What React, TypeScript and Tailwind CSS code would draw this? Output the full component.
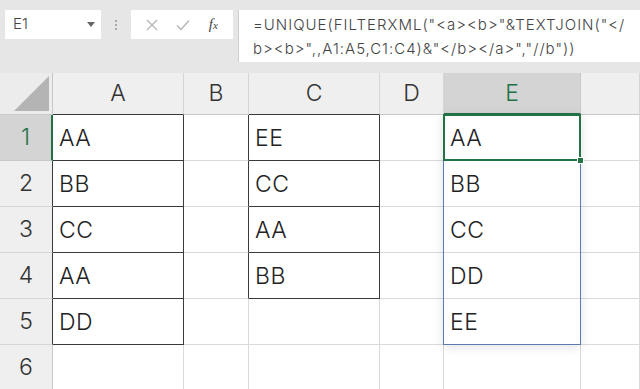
import React from 'react';

const cols = ['A', 'B', 'C', 'D', 'E', 'F'];
const data: Record<string, string> = {
  A1: 'AA', A2: 'BB', A3: 'CC', A4: 'AA', A5: 'DD',
  C1: 'EE', C2: 'CC', C3: 'AA', C4: 'BB',
  E1: 'AA', E2: 'BB', E3: 'CC', E4: 'DD', E5: 'EE',
};

// cells inside the bordered ranges A1:A5 and C1:C4
const inRange = (c: string, r: number) => (c === 'A' && r <= 5) || (c === 'C' && r <= 4);

function Cell({ c, r }: { c: string; r: number }) {
  const right = inRange(c, r) || (c === 'B' && r <= 4) ? 'border-r-[#3a3a3a]' : 'border-r-[#dadada]';
  const bottom = inRange(c, r) ? 'border-b-[#3a3a3a]' : 'border-b-[#dadada]';
  return (
    <div className={`border-r border-b ${right} ${bottom} bg-white flex items-center pl-[6px] pt-[1px] text-[23px] font-light tracking-[0.5px] text-[#222] overflow-hidden`}>
      {data[c + r] ?? ''}
    </div>
  );
}

export default function App() {
  const font = { fontFamily: 'Inter, "Noto Sans CJK JP", sans-serif' };
  return (
    <div className="w-[640px] h-[389px] overflow-hidden bg-[#e6e6e6]" style={font}>
      {/* toolbar */}
      <div className="h-[73px] flex items-start pt-[10px]">
        <div className="ml-[5px] w-[96px] h-[29px] bg-white flex items-center justify-between pl-[8px] pr-[6px]">
          <span className="text-[15px] font-light text-[#444]">E1</span>
          <svg width="8" height="5" viewBox="0 0 8 5"><path d="M0 0h8L4 5z" fill="#666" /></svg>
        </div>
        <div className="w-[30px] h-[29px] flex flex-col items-center justify-center gap-[2px]">
          <span className="w-[2px] h-[2px] bg-[#aaa]" />
          <span className="w-[2px] h-[2px] bg-[#aaa]" />
          <span className="w-[2px] h-[2px] bg-[#aaa]" />
        </div>
        <div className="w-[102px] h-[29px] bg-white flex items-center justify-around px-[6px]">
          <svg width="12" height="12" viewBox="0 0 12 12"><path d="M1 1l10 10M11 1L1 11" stroke="#b5b5b5" strokeWidth="1.3" /></svg>
          <svg width="14" height="12" viewBox="0 0 14 12"><path d="M1 6.5l4 4L13 1.5" stroke="#b5b5b5" strokeWidth="1.4" fill="none" /></svg>
          <span className="text-[15px] italic text-[#444]" style={{ fontFamily: '"Liberation Serif", serif' }}>
            f<span className="text-[11px]">x</span>
          </span>
        </div>
        <div className="ml-[5px] flex-1 h-[52px] bg-white border-l border-[#cfcfcf] pl-[14px] pt-[3px] text-[15px] font-light tracking-[1px] leading-[24px] text-[#444]">
          <div>=UNIQUE(FILTERXML("&lt;a&gt;&lt;b&gt;"&amp;TEXTJOIN("&lt;/</div>
          <div>b&gt;&lt;b&gt;",,A1:A5,C1:C4)&amp;"&lt;/b&gt;&lt;/a&gt;","//b"))</div>
        </div>
      </div>

      {/* sheet */}
      <div className="relative grid grid-cols-[53px_131px_65px_131px_64px_137px_1fr] grid-rows-[42px_46px_46px_46px_46px_46px_46px] bg-white">
        <div className="bg-[#ececec] border-r border-b border-[#c8c8c8] flex items-end justify-end pr-[3px] pb-[3px]">
          <svg width="35" height="35" viewBox="0 0 35 35"><path d="M35 0v35H0z" fill="#b4b4b4" /></svg>
        </div>
        {cols.map(c =>
          c === 'E' ? (
            <div key={c} className="bg-[#d4d4d4] border-r border-r-[#c8c8c8] border-b-2 border-b-[#217346] flex items-center justify-center text-[23px] font-light text-[#217346]">{c}</div>
          ) : (
            <div key={c} className={`bg-[#efefef] border-r border-b border-r-[#d6d6d6] flex items-center justify-center text-[23px] font-light text-[#333] ${c === 'A' || c === 'C' ? 'border-b-[#3a3a3a]' : 'border-b-[#c8c8c8]'}`}>{c === 'F' ? '' : c}</div>
          )
        )}
        {[1, 2, 3, 4, 5, 6].map(r => (
          <React.Fragment key={r}>
            {r === 1 ? (
              <div className="bg-[#d4d4d4] border-r-2 border-r-[#217346] border-b border-b-[#c8c8c8] flex items-center justify-center text-[23px] font-light text-[#217346]">{r}</div>
            ) : (
              <div className={`bg-[#efefef] border-r border-b border-b-[#d6d6d6] flex items-center justify-center text-[23px] font-light text-[#333] ${r <= 5 ? 'border-r-[#3a3a3a]' : 'border-r-[#c8c8c8]'}`}>{r}</div>
            )}
            {cols.map(c => <Cell key={c + r} c={c} r={r} />)}
          </React.Fragment>
        ))}

        {/* spill range E1:E5 */}
        <div className="absolute left-[443px] top-[41px] w-[138px] h-[231px] border border-[#5b7bb0] shadow-[0_2px_10px_rgba(0,0,0,0.12)] pointer-events-none" />
        {/* active cell E1 */}
        <div className="absolute left-[443px] top-[41px] w-[138px] h-[47px] border-2 border-[#217346] pointer-events-none" />
        <div className="absolute left-[577px] top-[84px] w-[7px] h-[7px] bg-[#217346] border border-white" />
      </div>
    </div>
  );
}
